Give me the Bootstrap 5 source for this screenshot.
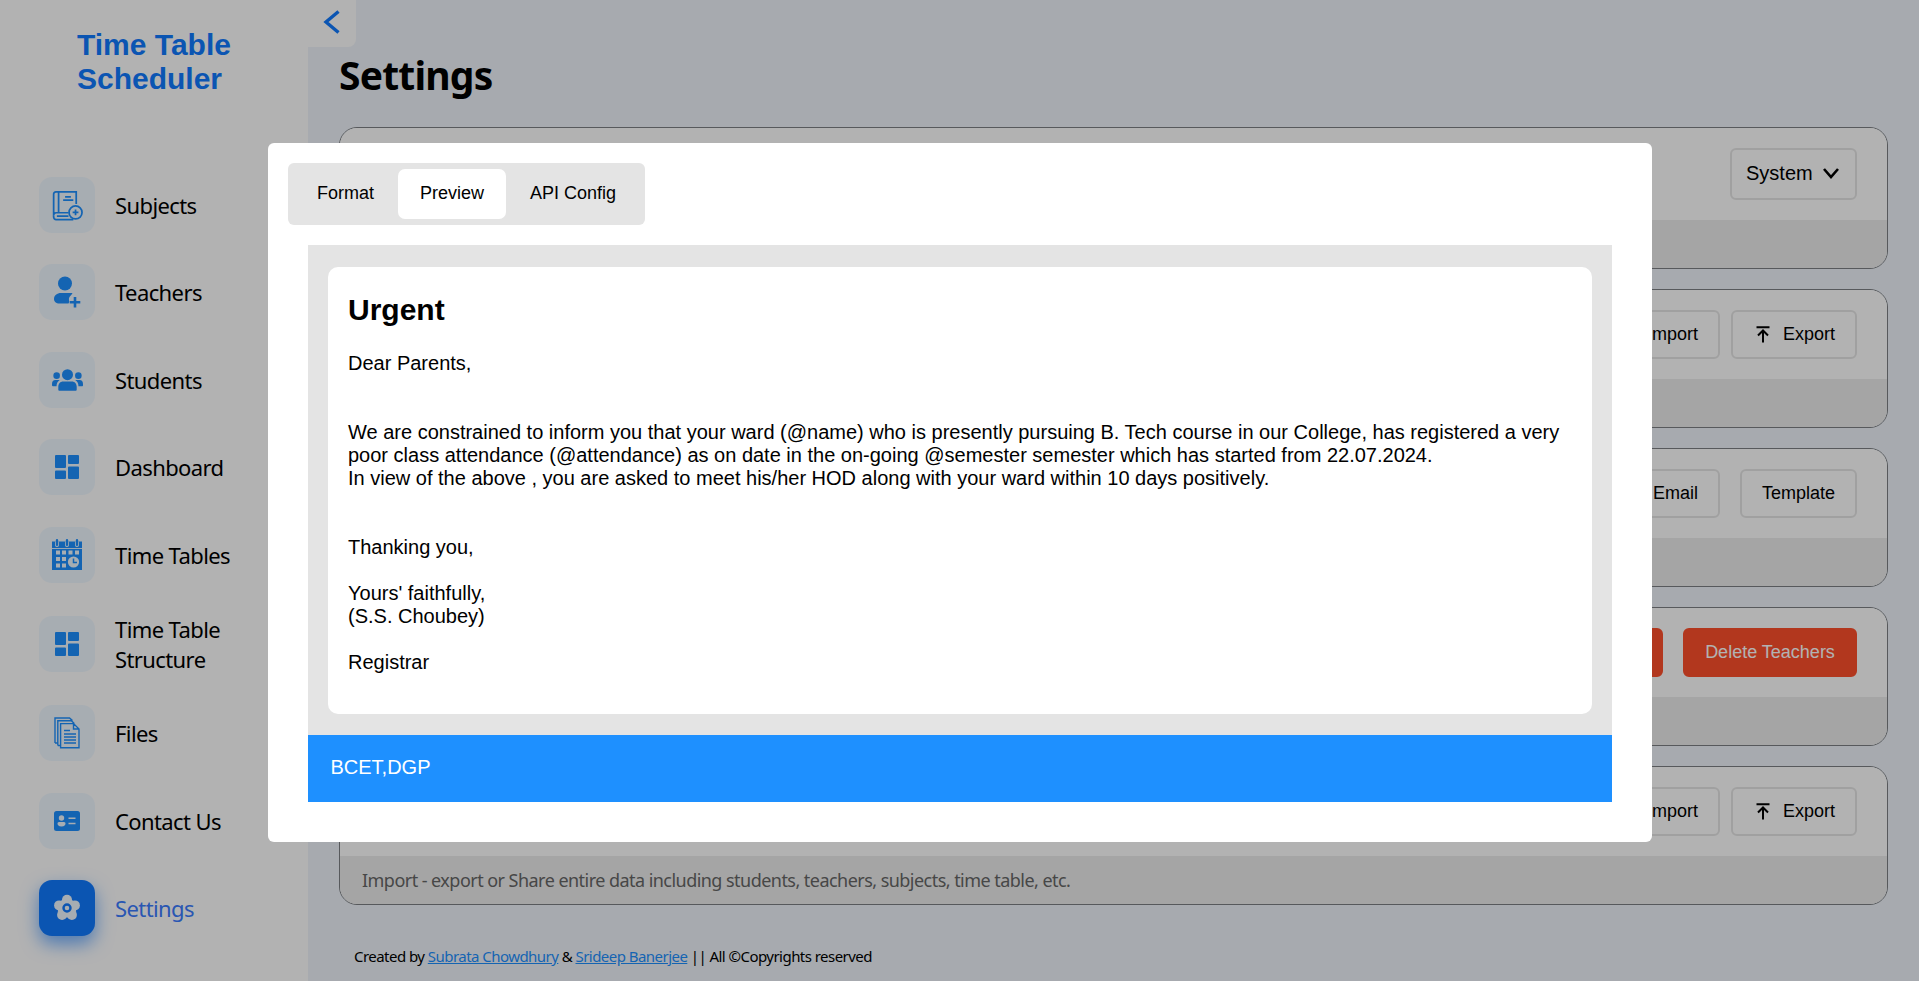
<!DOCTYPE html>
<html lang="en">
<head>
<meta charset="utf-8">
<title>Settings - Time Table Scheduler</title>
<link href="https://cdn.jsdelivr.net/npm/bootstrap@5.3.0/dist/css/bootstrap.min.css" rel="stylesheet">
<style>
body{font-family:"Liberation Sans",Arial,sans-serif;color:#000;background:#eff4fb;height:100vh;overflow:hidden;line-height:1.15}
.segoe{font-family:"Noto Sans",sans-serif}
.side{width:308px;background:#fff}
.brand{font-size:30px;line-height:34px;color:#117aff;padding:28px 0 0 77px;height:177px}
.side-nav{gap:31.4px;padding-left:39px}
.side-item{gap:20px;min-height:56px;color:#000;text-decoration:none;font-size:22px;line-height:30px;letter-spacing:-.6px}
.tile{width:56px;height:56px;border-radius:13px;background:#f0f8ff;color:#1e90ff}
.side-item.current{color:#3b7cff}
.side-item.current .tile{background:#117aff;color:#f0f8ff;box-shadow:0 8px 18px rgba(17,122,255,.6)}
.content-area{padding:0 31px 0 31px}
.collapse-btn{width:48px;height:47px;margin-left:-31px;background:#fff;border:0;border-radius:0 0 8px 0;padding:0 0 3px 13px;color:#117aff}
.page-title{font-size:39px;line-height:56px;letter-spacing:-.8px;height:80px}
.set-card{border:1px solid #7d8084;border-radius:18px;overflow:hidden;margin-bottom:20px;height:139px}
.set-card.tall{height:142px}
.set-head{background:#fff;padding:20px 30px 0}
.set-foot{background:#ededed;height:48px;flex:none;color:#666;font-size:18px;padding-left:22px;letter-spacing:-.54px}
.ctl{height:49px;border:2px solid #e6e6e6;border-radius:6px;font-size:18px;padding:0 20px;background:#fff;color:#000}
.ctl-select{height:52px;font-size:20px;padding:0 16px 2px 14px;width:127px}
.ctl-pair{gap:11px}
.ctl-icon{gap:13px;padding-left:23px}
.ctl-danger{background:#ff4f2b;border-color:#ff4f2b;color:#fff}
.ctl-wide{min-width:174px}
.credits{font-size:15px;padding:43px 0 0 15px;letter-spacing:-.54px}
.credits a{color:#1e90ff}
.modal-backdrop.show{opacity:.3}
.tpl-dialog{width:1384px;max-width:none;margin:143px 0 0 268px}
.tpl-box{border:0;border-radius:6px;height:699px;padding:20px 40px 40px}
.tabs{background:#e4e4e4;border-radius:6px;height:62px;width:357px;margin-left:-20px;padding:6px 6px 6px 7px;gap:2px}
.tab-btn{border:0;border-radius:6px;background:none;font-size:18px;padding:0 0 2px;color:#000;width:101px;height:50px}
.tab-btn.on{background:#fff;width:108px;border-radius:7px}
.tab-btn.last{width:130px}
.mail{background:#e4e4e4;margin-top:20px;height:489.500px;padding:22px 20px 20px}
.letter{background:#fff;border-radius:10px;padding:26px 20px 0;height:447px;font-size:20px;line-height:23px}
.letter h2{font-size:30px;line-height:34px;margin:0 0 25px}
.letter p{white-space:pre-line;margin:0}
.mail-foot{background:#1e90ff;color:#fff;height:67.500px;font-size:20px;padding:0 0 1px 22.500px}
</style>
<script src="https://cdn.jsdelivr.net/npm/bootstrap@5.3.0/dist/js/bootstrap.bundle.min.js"></script>
</head>
<body class="d-flex">
<svg class="d-none" xmlns="http://www.w3.org/2000/svg">
  <symbol id="grid" viewBox="0 0 24 24"><path fill="currentColor" d="M1 0h9a1 1 0 0 1 1 1v11a1 1 0 0 1-1 1H1a1 1 0 0 1-1-1V1a1 1 0 0 1 1-1zM14 0h9a1 1 0 0 1 1 1v7a1 1 0 0 1-1 1h-9a1 1 0 0 1-1-1V1a1 1 0 0 1 1-1zM1 15.500h9a1 1 0 0 1 1 1V23a1 1 0 0 1-1 1H1a1 1 0 0 1-1-1v-6.500a1 1 0 0 1 1-1zM14 11.500h9a1 1 0 0 1 1 1V23a1 1 0 0 1-1 1h-9a1 1 0 0 1-1-1V12.500a1 1 0 0 1 1-1z"/></symbol>
  <symbol id="upload" viewBox="0 0 14 17"><path d="M.5 1.200h13M7 16.500V5M2 9.500l5-5 5 5" fill="none" stroke="currentColor" stroke-width="2"/></symbol>
</svg>

<aside class="side flex-shrink-0 vh-100">
  <h1 class="brand fw-bold m-0">Time Table<br>Scheduler</h1>
  <nav class="side-nav segoe d-flex flex-column">
    <a class="side-item d-flex align-items-center" href="#"><span class="tile d-flex align-items-center justify-content-center flex-shrink-0">
      <svg width="31" height="32" viewBox="0 0 32 32" fill="none" stroke="currentColor" stroke-width="1.800"><path d="M25 15V2.500H4A2.300 2.300 0 0 0 1.700 5v23.500A2.500 2.500 0 0 0 4.200 31H22M17 24H4.200a2.600 2.600 0 0 0-2.500 2.700M6.800 2.500V24M5 27.500h12M13.500 7.500h6M11.500 11h10.500"/><circle cx="24.300" cy="23.700" r="6.700"/><path d="M24.300 20.700v6M21.300 23.700h6"/></svg></span>Subjects</a>
    <a class="side-item d-flex align-items-center" href="#"><span class="tile d-flex align-items-center justify-content-center flex-shrink-0">
      <svg width="28" height="32" viewBox="0 0 28 32" fill="currentColor"><circle cx="12" cy="7.500" r="7"/><path d="M8 17h11.500c-.5 1.800-3 3-3.500 5s1 4-.5 5.500H6.500C3 27.500 1 25.500 1 23c0-3.500 3-6 7-6z"/><path fill="none" stroke="currentColor" stroke-width="2.600" d="M22 21v10.500M16.700 26.200h10.600"/></svg></span>Teachers</a>
    <a class="side-item d-flex align-items-center" href="#"><span class="tile d-flex align-items-center justify-content-center flex-shrink-0">
      <svg width="31" height="24" viewBox="0 0 32 24" fill="currentColor"><circle cx="16" cy="6.500" r="5.700"/><circle cx="4.800" cy="7.500" r="3.400"/><circle cx="27.200" cy="7.500" r="3.400"/><path d="M11.500 13.500h9c3 0 5 2.300 5 5.500v3a1 1 0 0 1-1 1h-17a1 1 0 0 1-1-1v-3c0-3.200 2-5.500 5-5.500zM3.500 12H8c-2.200 1.500-3.300 3.500-3.300 6.500H1c-.6 0-1-.4-1-1V16c0-2.400 1.300-4 3.500-4zM28.500 12H24c2.200 1.500 3.300 3.500 3.300 6.500H31c.6 0 1-.4 1-1V16c0-2.400-1.300-4-3.500-4z"/></svg></span>Students</a>
    <a class="side-item d-flex align-items-center" href="#"><span class="tile d-flex align-items-center justify-content-center flex-shrink-0"><svg width="24" height="24"><use href="#grid"/></svg></span>Dashboard</a>
    <a class="side-item d-flex align-items-center" href="#"><span class="tile d-flex align-items-center justify-content-center flex-shrink-0">
      <svg width="30" height="31" viewBox="0 0 30 31"><path fill="currentColor" d="M0 2.500h30V31H0z"/><path stroke="#f0f8ff" stroke-width=".9" fill="none" d="M0 9.500h30"/><path stroke="#f0f8ff" stroke-width="4" stroke-linecap="round" d="M5 3.500v2.500M15 3.500v2.500M25 3.500v2.500"/><path stroke="currentColor" stroke-width="2.400" stroke-linecap="round" d="M5 1.300v4.500M15 1.300v4.500M25 1.300v4.500"/><path fill="#f0f8ff" d="M4 11.500h4v4H4zM10 11.500h4v4h-4zM16.500 11.500h4v4h-4zM23 11.500h4v4h-4zM4 18h4v4H4zM10 18h4v4h-4zM4 24.500h4v4H4zM10 24.500h4v4h-4z"/><circle cx="21.500" cy="23" r="5.600" fill="#f0f8ff"/><path fill="none" stroke="currentColor" stroke-width="1.500" d="M21.500 19.500V23.500h3.500"/></svg></span>Time Tables</a>
    <a class="side-item d-flex align-items-center" href="#"><span class="tile d-flex align-items-center justify-content-center flex-shrink-0"><svg width="24" height="24"><use href="#grid"/></svg></span><span>Time Table<br>Structure</span></a>
    <a class="side-item d-flex align-items-center" href="#"><span class="tile d-flex align-items-center justify-content-center flex-shrink-0">
      <svg width="26" height="32" viewBox="0 0 26 32" fill="none" stroke="currentColor" stroke-width="1.400"><path d="M6.600 6.600h13L25 12v18.700H6.600zM19.500 6.600V12H25M3.800 28.500V3.800h13.500l3 2.800M3.800 28.500h2.600M1 26V1h14.500l3 2.600M1 26h2.600"/><path stroke-width="1.500" d="M10 13.500h6M10 17h12M10 20h12M10 23h12M10 26h12"/></svg></span>Files</a>
    <a class="side-item d-flex align-items-center" href="#"><span class="tile d-flex align-items-center justify-content-center flex-shrink-0">
      <svg width="26" height="20" viewBox="0 0 26 20"><rect width="26" height="20" rx="2.500" fill="currentColor"/><g fill="#f0f8ff"><circle cx="7.500" cy="7" r="2.700"/><path d="M5 11h5c1 0 1.500.8 1.500 1.800S10.500 15.500 7.500 15.500 3.500 13.800 3.500 12.800 4 11 5 11z"/><path d="M14.500 6.500h7V8h-7zM14.500 11.700h7v1.500h-7z"/></g></svg></span>Contact Us</a>
    <a class="side-item current d-flex align-items-center" href="#"><span class="tile d-flex align-items-center justify-content-center flex-shrink-0">
      <svg width="28" height="28" viewBox="-14 -14 28 28"><g fill="currentColor"><circle r="9.500"/><circle cy="-8.300" r="5"/><circle cx="7.900" cy="-2.600" r="5"/><circle cx="4.900" cy="6.900" r="5"/><circle cx="-4.900" cy="6.900" r="5"/><circle cx="-7.900" cy="-2.600" r="5"/></g><circle r="3.500" fill="none" stroke="#117aff" stroke-width="2.400"/></svg></span>Settings</a>
  </nav>
</aside>

<main class="content-area flex-grow-1">
  <button class="collapse-btn d-flex align-items-center" aria-label="Collapse">
    <svg width="20" height="24" viewBox="0 0 20 24" fill="none" stroke="currentColor" stroke-width="3.400"><path d="M17.500 1.500 5 12l12.500 10.500"/></svg></button>
  <h2 class="page-title segoe fw-bold m-0">Settings</h2>

  <section class="set-card tall d-flex flex-column">
    <div class="set-head flex-grow-1 d-flex justify-content-end"><button class="ctl ctl-select d-flex align-items-center justify-content-between">System
      <svg width="16" height="11" viewBox="0 0 16 11" fill="none" stroke="currentColor" stroke-width="2.600"><path d="M1 1l7 8 7-8"/></svg></button></div>
    <div class="set-foot"></div>
  </section>
  <section class="set-card d-flex flex-column">
    <div class="set-head ctl-pair flex-grow-1 d-flex justify-content-end">
      <button class="ctl">Import</button>
      <button class="ctl ctl-icon d-flex align-items-center"><svg width="14" height="17"><use href="#upload"/></svg>Export</button></div>
    <div class="set-foot"></div>
  </section>
  <section class="set-card d-flex flex-column">
    <div class="set-head flex-grow-1 d-flex justify-content-end">
      <button class="ctl me-3">Email</button><button class="ctl ms-1">Template</button></div>
    <div class="set-foot"></div>
  </section>
  <section class="set-card d-flex flex-column">
    <div class="set-head flex-grow-1 d-flex justify-content-end">
      <button class="ctl ctl-danger ctl-wide me-3" aria-label="Delete"></button><button class="ctl ctl-danger ctl-wide ms-1">Delete Teachers</button></div>
    <div class="set-foot"></div>
  </section>
  <section class="set-card d-flex flex-column mb-0">
    <div class="set-head ctl-pair flex-grow-1 d-flex justify-content-end">
      <button class="ctl">Import</button>
      <button class="ctl ctl-icon d-flex align-items-center"><svg width="14" height="17"><use href="#upload"/></svg>Export</button></div>
    <div class="set-foot segoe d-flex align-items-center">Import - export or Share entire data including students, teachers, subjects, time table, etc.</div>
  </section>
  <footer class="credits segoe">Created by <a href="#">Subrata Chowdhury</a> &amp; <a href="#">Srideep Banerjee</a> || All ©Copyrights reserved</footer>
</main>

<div class="modal-backdrop show"></div>
<div class="modal show d-block" tabindex="-1">
  <div class="modal-dialog tpl-dialog">
    <div class="modal-content tpl-box">
      <div class="tabs d-flex">
        <button class="tab-btn">Format</button><button class="tab-btn on">Preview</button><button class="tab-btn last">API Config</button>
      </div>
      <div class="mail">
        <div class="letter"><h2 class="fw-bold">Urgent</h2><p>Dear Parents,


We are constrained to inform you that your ward (@name) who is presently pursuing B. Tech course in our College, has registered a very poor class attendance (@attendance) as on date in the on-going @semester semester which has started from 22.07.2024.
In view of the above , you are asked to meet his/her HOD along with your ward within 10 days positively.


Thanking you,

Yours' faithfully,
(S.S. Choubey)

Registrar</p></div>
      </div>
      <div class="mail-foot d-flex align-items-center">BCET,DGP</div>
    </div>
  </div>
</div>
</body>
</html>
